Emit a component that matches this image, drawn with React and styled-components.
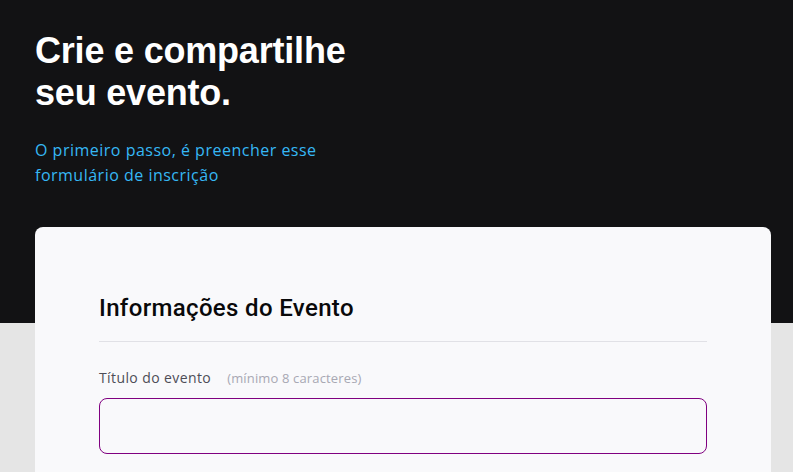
import React from 'react';
import styled, { createGlobalStyle } from 'styled-components';

const GlobalStyle = createGlobalStyle`
  * {
    box-sizing: border-box;
  }

  body {
    margin: 0;
    background: #e5e5e5;
    font-family: 'Open Sans', 'Noto Sans', sans-serif;
  }
`;

const Page = styled.div`
  min-height: 100vh;
  background: #e5e5e5;
`;

const Hero = styled.header`
  background: #121214;
  height: 323px;
  padding: 30px 35px 0;
`;

const Title = styled.h1`
  margin: 0;
  width: 330px;
  font-family: 'Liberation Sans', Arial, sans-serif;
  font-size: 36px;
  font-weight: 700;
  line-height: 42px;
  color: #ffffff;
  letter-spacing: -0.2px;
`;

const Subtitle = styled.p`
  margin: 24px 0 0;
  width: 320px;
  font-size: 16px;
  line-height: 25px;
  letter-spacing: 0.5px;
  color: #36b8f5;
`;

const Card = styled.main`
  margin: -96px 22px 0 35px;
  background: #f9f9fb;
  border-radius: 8px;
  padding: 65px 64px 40px;
`;

const SectionTitle = styled.h2`
  margin: 0;
  padding-bottom: 17px;
  border-bottom: 1px solid #e1e1e6;
  font-family: Roboto, 'Liberation Sans', sans-serif;
  font-size: 24px;
  line-height: 32px;
  font-weight: 500;
  letter-spacing: 0.35px;
  color: #09090a;
`;

const Field = styled.div`
  margin-top: 26px;
`;

const Label = styled.label`
  display: flex;
  align-items: baseline;
  gap: 16px;
  font-size: 14px;
  letter-spacing: 0.4px;
  color: #4d4d57;
`;

const Hint = styled.span`
  font-size: 13px;
  letter-spacing: 0.15px;
  color: #a8a8b3;
`;

const Input = styled.input`
  display: block;
  width: 100%;
  height: 56px;
  margin-top: 11px;
  border: 1px solid #800080;
  border-radius: 8px;
  background: #f9f9fb;
  padding: 0 16px;
  font-size: 16px;
  outline: none;
`;

export default function App() {
  return (
    <Page>
      <GlobalStyle />
      <Hero>
        <Title>Crie e compartilhe seu evento.</Title>
        <Subtitle>O primeiro passo, é preencher esse formulário de inscrição</Subtitle>
      </Hero>
      <Card>
        <SectionTitle>Informações do Evento</SectionTitle>
        <Field>
          <Label>
            Título do evento
            <Hint>(mínimo 8 caracteres)</Hint>
          </Label>
          <Input type="text" />
        </Field>
      </Card>
    </Page>
  );
}
